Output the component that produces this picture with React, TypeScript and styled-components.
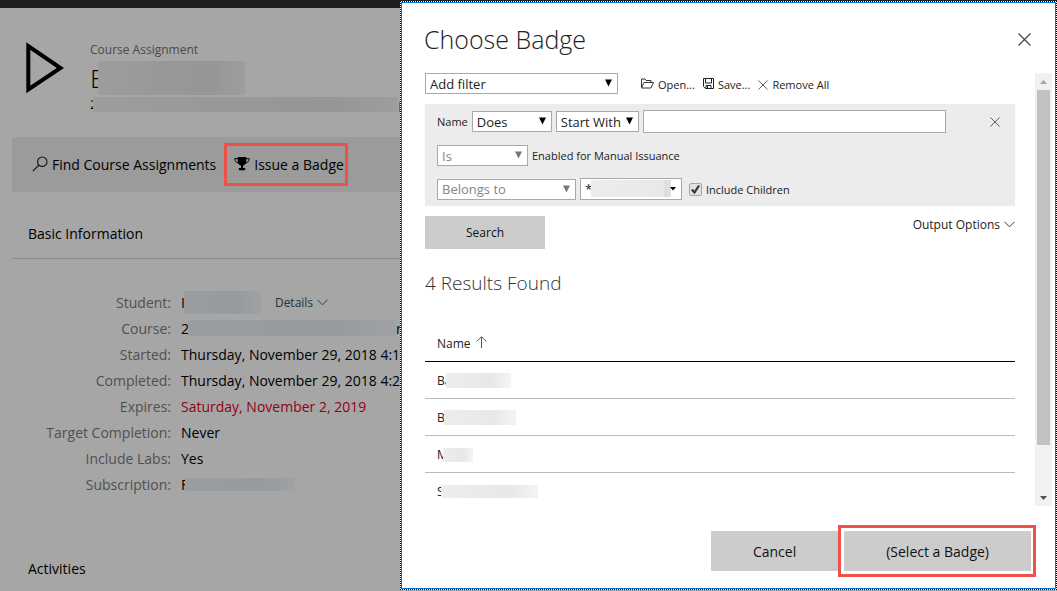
import React from "react";
import styled, { createGlobalStyle } from "styled-components";

const GlobalStyle = createGlobalStyle`
  * { box-sizing: border-box; }
  body {
    margin: 0;
    background: #a6a6a6;
    font-family: "Open Sans", "Noto Sans", sans-serif;
    font-size: 14px;
    color: #000;
    overflow: hidden;
  }
  h1, h2, h3, p, dl, dd { margin: 0; font-weight: 400; }
  button, input, select { font: inherit; color: inherit; margin: 0; }
`;

const Page = styled.div`
  min-height: 100vh;
  background: #a6a6a6;
  white-space: nowrap;
`;

const TopBar = styled.div`
  height: 8px;
  background: #1f1f1f;
`;

const Main = styled.main`
  padding-left: 12px;
`;

const Heading = styled.header`
  display: flex;
  gap: 26px;
  padding: 32px 0 0 14px;
  height: 129px;
`;

const HeadingText = styled.div`
  display: flex;
  flex-direction: column;
`;

const Kind = styled.p`
  font-size: 12px;
  line-height: 20px;
  color: #4a4a4a;
`;

const CourseName = styled.h1`
  display: flex;
  align-items: center;
  height: 36px;
  font-size: 26px;
  font-weight: 300;
`;

const CourseLine = styled.p`
  display: flex;
  align-items: center;
  height: 16px;
  font-size: 13px;
`;

const Masked = styled.span<{ $w: number; $h: number; $tone?: string; $over?: number }>`
  flex: none;
  position: relative;
  width: ${(p) => p.$w}px;
  height: ${(p) => p.$h}px;
  margin-left: ${(p) => -(p.$over ?? 4)}px;
  background: ${(p) => p.$tone ?? "linear-gradient(90deg, #ededed, #e8e8e8 70%, #f4f4f4)"};
`;

const darkTone = "linear-gradient(90deg, #9d9d9d, #989898 45%, #969696 80%, #9e9e9e)";
const coolTone = "linear-gradient(90deg, #9a9d9f, #989b9d 70%, #9fa2a4)";

const Toolbar = styled.div`
  display: flex;
  align-items: center;
  height: 55px;
  padding-left: 20px;
  gap: 8px;
  background: #9b9b9b;
`;

const ToolButton = styled.button<{ $marked?: boolean }>`
  display: flex;
  align-items: center;
  gap: 4px;
  height: 43px;
  padding: ${(p) => (p.$marked ? "0 1px 0 7px" : "0")};
  border: ${(p) => (p.$marked ? "3px solid #ef5048" : "0")};
  background: none;
  font-size: 14px;
`;

const SectionTitle = styled.h2`
  padding: 0 16px;
  font-size: 14px;
  line-height: 20px;
`;

const Basic = styled.section`
  padding-top: 32px;
`;

const Rule = styled.hr`
  margin: 14px 0 30px;
  border: 0;
  border-top: 1px solid #8c8c8c;
`;

const Facts = styled.dl`
  display: grid;
  grid-template-columns: 159px auto;
  column-gap: 10px;
  grid-auto-rows: 26px;
  align-items: center;
`;

const Term = styled.dt`
  text-align: right;
  color: #505050;
`;

const Value = styled.dd<{ $late?: boolean }>`
  display: flex;
  align-items: center;
  color: ${(p) => (p.$late ? "#930012" : "#000")};
`;

const DetailsButton = styled.button`
  display: flex;
  align-items: center;
  gap: 4px;
  margin-left: 14px;
  padding: 0;
  border: 0;
  background: none;
  font-size: 12px;
  color: #1d3443;
`;

const Activities = styled.section`
  padding-top: 62px;
`;

const DialogFrame = styled.div`
  position: fixed;
  top: 1px;
  bottom: 1px;
  left: 400px;
  right: 0;
  border: 1px dotted #000;
  background: #fff;
`;

const Dialog = styled.section`
  display: flex;
  flex-direction: column;
  height: 100%;
  border: 1px solid #0078d7;
  color: #222;
  font-size: 12px;
  white-space: nowrap;
`;

const DialogHeader = styled.header`
  display: flex;
  align-items: center;
  justify-content: space-between;
  height: 70px;
  padding: 2px 24px 0 22px;
`;

const DialogTitle = styled.h2`
  font-size: 25px;
  font-weight: 300;
  line-height: 34px;
  color: #222;
`;

const PlainButton = styled.button`
  display: flex;
  align-items: center;
  gap: 4px;
  padding: 0;
  border: 0;
  background: none;
`;

const ScrollArea = styled.div`
  flex: 1;
  min-height: 0;
  display: flex;
  gap: 20px;
  padding: 0 3px 0 23px;
`;

const Content = styled.div`
  flex: 1;
  min-width: 0;
  overflow: hidden;
`;

const ScrollTrack = styled.div`
  flex: none;
  display: flex;
  flex-direction: column;
  justify-content: space-between;
  align-items: center;
  width: 17px;
  background: #f1f1f1;
`;

const ScrollArrow = styled.span`
  display: flex;
  align-items: center;
  justify-content: center;
  height: 17px;
`;

const ScrollRail = styled.div`
  flex: 1;
  width: 13px;
`;

const ScrollThumb = styled.div`
  height: 89%;
  background: #c1c1c1;
`;

const FilterBar = styled.div`
  display: flex;
  align-items: center;
  gap: 8px;
  margin-bottom: 10px;
`;

const FilterActions = styled.div`
  display: flex;
  gap: 8px;
  padding: 2px 0 0 15px;
  font-size: 11px;
`;

const SelectBox = styled.span<{ $w: number; $tall?: boolean; $off?: boolean }>`
  position: relative;
  flex: none;
  display: inline-flex;
  width: ${(p) => p.$w}px;
  height: ${(p) => (p.$tall ? 22 : 21)}px;
  color: ${(p) => (p.$off ? "#858585" : "#222")};
`;

const NativeSelect = styled.select`
  appearance: none;
  width: 100%;
  padding: 0 4px;
  border: 1px solid #a9a9a9;
  border-radius: 0;
  background: #fff;
  font-size: 13px;
  line-height: 18px;
  opacity: 1;
  &:disabled { color: #858585; }
`;

const SelectArrow = styled.svg`
  position: absolute;
  top: 6px;
  right: 6px;
  pointer-events: none;
`;

const SelectMask = styled.span`
  position: absolute;
  top: 2px;
  left: 11px;
  width: 80px;
  height: 17px;
  background: linear-gradient(90deg, #ececec, #e9e9e9 90%, #dedede 92%);
  pointer-events: none;
`;

const FilterPanel = styled.div`
  display: flex;
  flex-direction: column;
  gap: 12px;
  padding: 6px 12px;
  background: #ececec;
  font-size: 11px;
`;

const FilterRow = styled.div`
  display: flex;
  align-items: center;
  gap: 4px;
`;

const FilterText = styled.input`
  flex: 1;
  height: 23px;
  padding: 0 4px;
  border: 1px solid #a9a9a9;
  background: #fff;
`;

const RemoveFilter = styled(PlainButton)`
  padding: 0 3px 0 40px;
`;

const CheckLabel = styled.label`
  display: flex;
  align-items: center;
  gap: 4px;
  padding-left: 3px;
`;

const Check = styled.input`
  appearance: none;
  width: 13px;
  height: 13px;
  border: 1px solid #a5a5a5;
  border-radius: 2px;
  background: #e2e2e2;
`;

const CheckBox = styled.span`
  position: relative;
  display: flex;
`;

const CheckMark = styled.svg`
  position: absolute;
  inset: 0;
  pointer-events: none;
`;

const SearchRow = styled.div`
  display: flex;
  justify-content: space-between;
  align-items: flex-start;
  padding-top: 10px;
`;

const FillButton = styled.button<{ $big?: boolean }>`
  height: ${(p) => (p.$big ? 40 : 33)}px;
  padding: 0 ${(p) => (p.$big ? 42 : 41)}px;
  border: 0;
  background: #ccc;
  font-size: ${(p) => (p.$big ? 14 : 12)}px;
  color: #111;
`;

const ResultsTitle = styled.h3`
  padding: 20px 0 27px;
  font-size: 19px;
  font-weight: 300;
  line-height: 28px;
  color: #333;
`;

const Results = styled.table`
  width: 100%;
  border-collapse: collapse;
  th, td {
    height: 37px;
    padding: 2px 12px 0;
    font-weight: 400;
    text-align: left;
    border-bottom: 1px solid #bababa;
  }
  th { border-bottom-color: #000; }
`;

const Cell = styled.span`
  display: flex;
  align-items: center;
`;

const SortHead = styled(Cell)`
  gap: 5px;
`;

const Footer = styled.footer`
  display: flex;
  justify-content: flex-end;
  align-items: center;
  height: 82px;
  padding: 8px 19px 0 0;
`;

const Marked = styled.div`
  display: flex;
  padding: 3px 2px 3px 3px;
  border: 3px solid #ef5048;
`;

const Cross = ({ size }: { size: number }) => (
  <svg width={size} height={size} viewBox="0 0 12 12" fill="none" stroke="#444" strokeWidth={size > 11 ? 1.1 : 1}>
    <path d="M.5.5l11 11M11.5.5l-11 11" />
  </svg>
);

const Chevron = () => (
  <svg width="11" height="7" viewBox="0 0 11 7" fill="none" stroke="currentColor" strokeWidth="0.9">
    <path d="M.5.8l5 5 5-5" />
  </svg>
);

type PickProps = { label: string; value: string; w: number; off?: boolean };
const Pick = ({ label, value, w, off }: PickProps) => (
  <SelectBox $w={w} $off={off}>
    <NativeSelect aria-label={label} disabled={off}>
      <option>{value}</option>
    </NativeSelect>
    <SelectArrow width="7" height="8" viewBox="0 0 7 8">
      <path d="M0 .5h7L3.5 7.5z" fill={off ? "#777" : "#000"} />
    </SelectArrow>
  </SelectBox>
);

const results = [
  { start: "Ba", w: 65, h: 15, over: 5 },
  { start: "B", w: 72, h: 15, over: 1 },
  { start: "M", w: 30, h: 14, over: 5 },
  { start: "S", w: 97, h: 13, over: 3 },
];

export default function App() {
  return (
    <Page>
      <GlobalStyle />
      <TopBar />
      <Main>
        <Heading>
          <svg width="38" height="55" viewBox="0 0 38 55" fill="none" stroke="#000" strokeWidth="4">
            <path d="M2.3 6v43.500L34.500 28z" />
          </svg>
          <HeadingText>
            <Kind>Course Assignment</Kind>
            <CourseName>
              E<Masked $w={147} $h={34} $tone={darkTone} $over={6} />
            </CourseName>
            <CourseLine>
              2<Masked $w={305} $h={15} $tone={darkTone} $over={4} />p
            </CourseLine>
          </HeadingText>
        </Heading>
        <Toolbar>
          <ToolButton type="button">
            <svg width="16" height="18" viewBox="0 0 16 18" fill="none" stroke="#111" strokeWidth="1.1">
              <circle cx="10.3" cy="5.7" r="4.7" />
              <path d="M7 9L.8 15.2" />
            </svg>
            Find Course Assignments
          </ToolButton>
          <ToolButton type="button" $marked>
            <svg width="16" height="16" viewBox="0 0 16 16">
              <path d="M3.7 0h8.6v3.5c0 2.800-1.300 4.600-3.300 5.200v2.300h2.200v2.200H4.800V11H7V8.700C5 8.100 3.700 6.300 3.700 3.500z" />
              <path d="M4 1.700H.8c0 2.300 1 4 4 4.300M12 1.700h3.200c0 2.300-1 4-4 4.300" fill="none" stroke="#000" />
            </svg>
            Issue a Badge
          </ToolButton>
        </Toolbar>
        <Basic>
          <SectionTitle>Basic Information</SectionTitle>
          <Rule />
          <Facts>
            <Term>Student:</Term>
            <Value>
              I<Masked $w={77} $h={23} $tone={coolTone} $over={1} />
              <DetailsButton type="button">
                Details <Chevron />
              </DetailsButton>
            </Value>
            <Term>Course:</Term>
            <Value>
              2<Masked $w={208} $h={16} $tone={coolTone} $over={1} />re
            </Value>
            <Term>Started:</Term>
            <Value>Thursday, November 29, 2018 4:1</Value>
            <Term>Completed:</Term>
            <Value>Thursday, November 29, 2018 4:2</Value>
            <Term>Expires:</Term>
            <Value $late>Saturday, November 2, 2019</Value>
            <Term>Target Completion:</Term>
            <Value>Never</Value>
            <Term>Include Labs:</Term>
            <Value>Yes</Value>
            <Term>Subscription:</Term>
            <Value>
              F<Masked $w={110} $h={13} $tone={coolTone} $over={3} />
            </Value>
          </Facts>
        </Basic>
        <Activities>
          <SectionTitle>Activities</SectionTitle>
        </Activities>
      </Main>

      <DialogFrame>
        <Dialog role="dialog" aria-label="Choose Badge">
          <DialogHeader>
            <DialogTitle>Choose Badge</DialogTitle>
            <PlainButton type="button" aria-label="Close">
              <Cross size={13} />
            </PlainButton>
          </DialogHeader>
          <ScrollArea>
            <Content>
              <FilterBar>
                <Pick label="Add filter" value="Add filter" w={193} />
                <FilterActions>
                  <PlainButton type="button">
                    <svg width="13" height="13" viewBox="0 0 13 13" fill="none" stroke="#333">
                      <path d="M.5 9.500V1h3.500l1 1.500h5v2M.6 10L3 4.500h9.500L10 10z" />
                    </svg>
                    Open...
                  </PlainButton>
                  <PlainButton type="button">
                    <svg width="11" height="13" viewBox="0 0 11 13" fill="none" stroke="#222">
                      <path d="M.5.5h10v10h-8l-2-2zM2.500.5v4.500h6V.5M3 10.500V7.500h5v3M4.500 8v2" />
                    </svg>
                    Save...
                  </PlainButton>
                  <PlainButton type="button">
                    <Cross size={10} />
                    Remove All
                  </PlainButton>
                </FilterActions>
              </FilterBar>
              <FilterPanel>
                <FilterRow>
                  <span>Name</span>
                  <Pick label="Name condition" value="Does" w={80} />
                  <Pick label="Name match" value="Start With" w={83} />
                  <FilterText type="text" aria-label="Name" />
                  <RemoveFilter type="button" aria-label="Remove filter">
                    <Cross size={10} />
                  </RemoveFilter>
                </FilterRow>
                <FilterRow>
                  <Pick label="Manual issuance condition" value="Is" w={91} off />
                  <span>Enabled for Manual Issuance</span>
                </FilterRow>
                <FilterRow>
                  <Pick label="Organization condition" value="Belongs to" w={139} off />
                  <SelectBox $w={102} $tall>
                    <NativeSelect aria-label="Organization">
                      <option>*S</option>
                    </NativeSelect>
                    <SelectMask />
                    <SelectArrow width="6" height="8" viewBox="0 0 6 8">
                      <path d="M0 3h6L3 6.500z" fill="#000" />
                    </SelectArrow>
                  </SelectBox>
                  <CheckLabel>
                    <CheckBox>
                      <Check type="checkbox" defaultChecked />
                      <CheckMark width="13" height="13" viewBox="0 0 13 13" fill="none" stroke="#333" strokeWidth="2.200">
                        <path d="M2.800 6.500l2.700 3 4.500-7" />
                      </CheckMark>
                    </CheckBox>
                    Include Children
                  </CheckLabel>
                </FilterRow>
              </FilterPanel>
              <SearchRow>
                <FillButton type="button">Search</FillButton>
                <PlainButton type="button">
                  Output Options <Chevron />
                </PlainButton>
              </SearchRow>
              <ResultsTitle>4 Results Found</ResultsTitle>
              <Results>
                <thead>
                  <tr>
                    <th>
                      <SortHead>
                        Name
                        <svg width="11" height="14" viewBox="0 0 11 14" fill="none" stroke="#444" strokeWidth="0.9">
                          <path d="M5.500 12V1M.7 5.500L5.500.7l4.800 4.800" />
                        </svg>
                      </SortHead>
                    </th>
                  </tr>
                </thead>
                <tbody>
                  {results.map((r) => (
                    <tr key={r.start + r.w}>
                      <td>
                        <Cell>
                          {r.start}
                          <Masked $w={r.w} $h={r.h} $over={r.over} />
                        </Cell>
                      </td>
                    </tr>
                  ))}
                </tbody>
              </Results>
            </Content>
            <ScrollTrack>
              <ScrollArrow>
                <svg width="7" height="4" viewBox="0 0 7 4">
                  <path d="M0 4L3.500 0 7 4z" fill="#a3a3a3" />
                </svg>
              </ScrollArrow>
              <ScrollRail>
                <ScrollThumb />
              </ScrollRail>
              <ScrollArrow>
                <svg width="7" height="4" viewBox="0 0 7 4">
                  <path d="M0 0h7L3.500 4z" fill="#505050" />
                </svg>
              </ScrollArrow>
            </ScrollTrack>
          </ScrollArea>
          <Footer>
            <FillButton type="button" $big>
              Cancel
            </FillButton>
            <Marked>
              <FillButton type="button" $big>
                (Select a Badge)
              </FillButton>
            </Marked>
          </Footer>
        </Dialog>
      </DialogFrame>
    </Page>
  );
}
